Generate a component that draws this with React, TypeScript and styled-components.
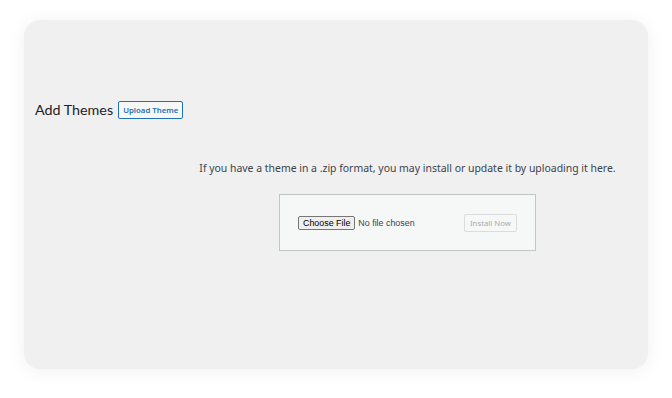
import React from "react";
import styled, { createGlobalStyle } from "styled-components";

const GlobalStyle = createGlobalStyle`
  html, body {
    margin: 0;
    padding: 0;
    background: #ffffff;
  }
  body {
    font-family: "Noto Sans", "Open Sans", "Liberation Sans", sans-serif;
    color: #1d2327;
  }
`;

const Page = styled.div`
  width: 672px;
  height: 398px;
  padding: 20px 24px 29px 24px;
  box-sizing: border-box;
`;

const Card = styled.div`
  height: 100%;
  background: #f0f0f1;
  border-radius: 16px;
  box-shadow: 0 2px 18px rgba(0, 0, 0, 0.06);
  padding-top: 80px;
  box-sizing: border-box;
`;

const Header = styled.div`
  display: flex;
  align-items: center;
  gap: 5px;
  padding-left: 11px;
`;

const Title = styled.h1`
  margin: 0;
  font-family: Lato, "Noto Sans", sans-serif;
  font-size: 14.3px;
  font-weight: 400;
  color: #1d2327;
  line-height: 20px;
`;

const OutlineButton = styled.button`
  height: 18px;
  padding: 0 4px;
  border: 1px solid #2271b1;
  border-radius: 2px;
  background: #f6f7f7;
  color: #2271b1;
  font-family: "Noto Sans", "Open Sans", sans-serif;
  font-size: 7.8px;
  font-weight: 600;
  cursor: pointer;
`;

const UploadSection = styled.div`
  margin-left: 143px;
  margin-top: 40px;
  display: flex;
  flex-direction: column;
  align-items: center;
`;

const Description = styled.p`
  margin: 0;
  font-size: 10.45px;
  color: #3c434a;
  line-height: 16px;
`;

const UploadBox = styled.form`
  margin-top: 18px;
  width: 257px;
  height: 57px;
  box-sizing: border-box;
  background: #f6f7f7;
  border: 1px solid #c3c4c7;
  display: flex;
  align-items: center;
  justify-content: space-between;
  padding: 0 18px;
`;

const FileInput = styled.input`
  font-family: "Liberation Sans", Arial, sans-serif;
  font-size: 8.9px;
  color: #3c434a;
  width: 130px;

  &::file-selector-button {
    font-family: "Liberation Sans", Arial, sans-serif;
    font-size: 8.9px;
    color: #000;
    background: #efefef;
    border: 1px solid #767676;
    border-radius: 2px;
    padding: 1px 4px;
    margin-right: 3px;
  }
`;

const DisabledButton = styled.button`
  height: 18px;
  padding: 0 5px;
  border: 1px solid #dcdcde;
  border-radius: 2px;
  background: #f6f7f7;
  color: #a7aaad;
  font-family: "Noto Sans", "Open Sans", sans-serif;
  font-size: 7.8px;
`;

export default function App() {
  return (
    <>
      <GlobalStyle />
      <Page>
        <Card>
          <Header>
            <Title>Add Themes</Title>
            <OutlineButton type="button">Upload Theme</OutlineButton>
          </Header>
          <UploadSection>
            <Description>
              If you have a theme in a .zip format, you may install or update it by uploading it here.
            </Description>
            <UploadBox onSubmit={(e) => e.preventDefault()}>
              <FileInput type="file" name="themezip" accept=".zip" />
              <DisabledButton type="submit" disabled>
                Install Now
              </DisabledButton>
            </UploadBox>
          </UploadSection>
        </Card>
      </Page>
    </>
  );
}
